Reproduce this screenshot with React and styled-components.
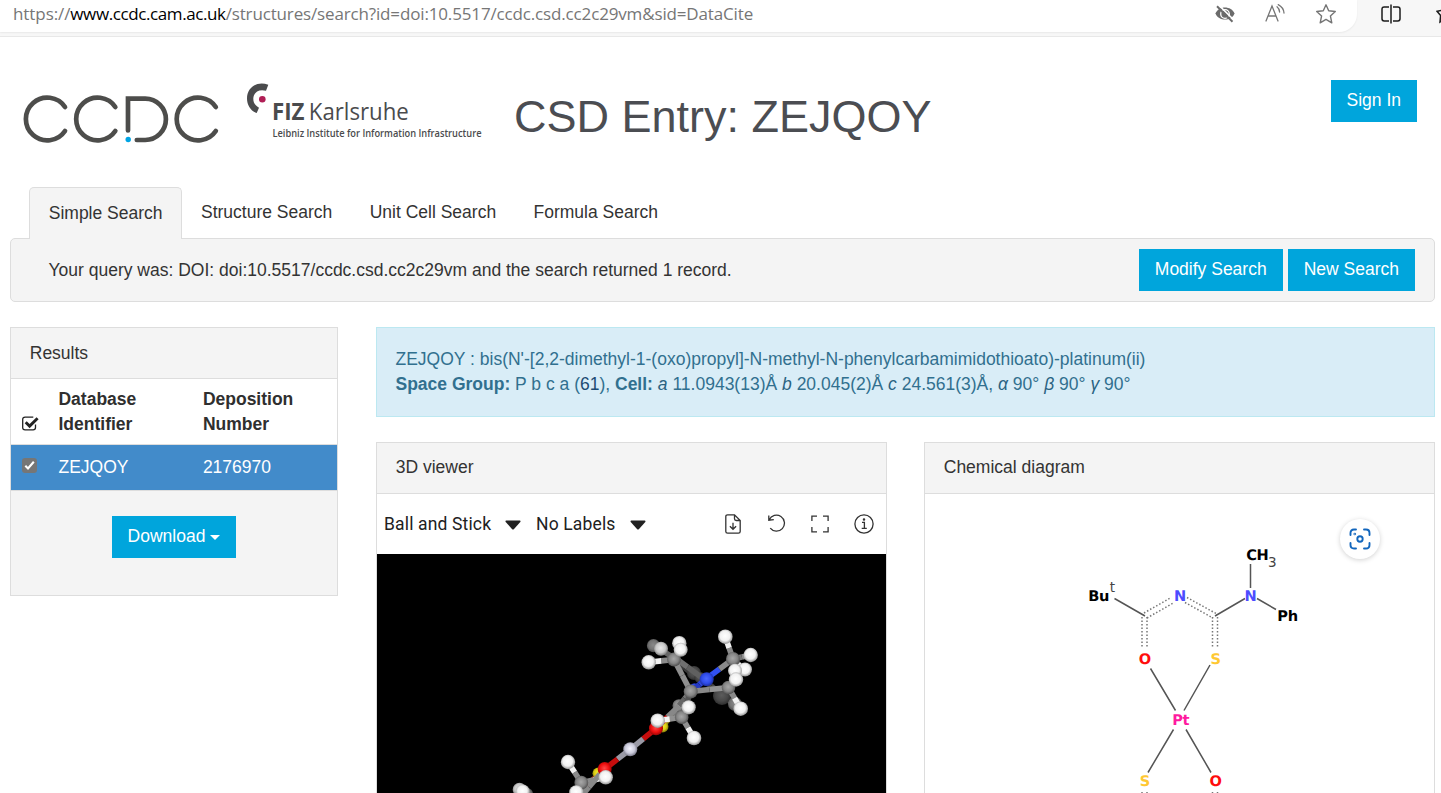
import React from 'react'
import styled, { createGlobalStyle } from 'styled-components'

const columns = ['Database Identifier', 'Deposition Number']
const tabs = ['Simple Search', 'Structure Search', 'Unit Cell Search', 'Formula Search']

// [x1, y1, x2, y2, first half colour, second half colour]
const backBonds = [
  [676, 661, 694, 675, '#3c3c3c', '#3c3c3c'],
  [655, 646, 674, 658, '#777', '#666'],
  [700, 677, 722, 695, '#4a4a4a', '#4a4a4a'],
  [722, 695, 736, 706, '#4a4a4a', '#777'],
  [663, 725, 682, 705, '#9a8a20', '#777'],
  [598, 775, 576, 795, '#9a2a10', '#666'],
]

const frontBonds = [
  [674, 657, 701, 677, '#707070', '#606060'],
  [706, 679, 693, 690, '#2c45dd', '#2438c0'],
  [706, 679, 733, 659, '#3150f0', '#8a8a8a'],
  [733, 659, 725.3, 637, '#8a8a8a', '#f2f2f2'],
  [733, 659, 750.7, 655, '#777', '#8d8d8d'],
  [733, 659, 743, 669, '#777', '#e8e8e8'],
  [690.7, 691.5, 679, 705.7, '#777', '#666'],
  [679, 706, 656, 728, '#888', '#c81010'],
  [674, 659.5, 690.7, 691.5, '#8f8f8f', '#8f8f8f'],
  [690.7, 691.5, 728.5, 687.5, '#888', '#949494'],
  [690.7, 691.5, 681.7, 717.3, '#555', '#666'],
  [674, 659.5, 648.7, 662.3, '#8a8a8a', '#f2f2f2'],
  [674, 659.5, 679.7, 648, '#8a8a8a', '#e0e0e0'],
  [728.5, 687.5, 736, 679.5, '#8a8a8a', '#e8e8e8'],
  [728.5, 687.5, 740.7, 708.7, '#8a8a8a', '#f2f2f2'],
  [681.7, 717.3, 688.7, 707.3, '#8a8a8a', '#ddd'],
  [681.7, 717.3, 694, 738, '#909090', '#f4f4f4'],
  [681.7, 717.3, 657.7, 720.7, '#909090', '#f4f4f4'],
  [656, 728.3, 630.3, 749.3, '#c60d0d', '#9a9aa6'],
  [630.3, 749.3, 604.7, 769, '#9a9aa6', '#c60d0d'],
  [581.3, 782.7, 605.7, 777.3, '#8a8a8a', '#f2f2f2'],
  [581.3, 782.7, 568, 762, '#8a8a8a', '#f2f2f2'],
  [581.3, 782.7, 576.3, 792.3, '#8a8a8a', '#f2f2f2'],
  [600, 774, 578, 800, '#888', '#888'],
]

// [x, y, radius, gradient]
const backAtoms = [
  [653.5, 645.7, 6.6, 'dim'],
  [694, 673, 7, 'dark'],
  [722, 696, 9, 'dark'],
  [735, 704, 7, 'dim'],
  [662.7, 726.7, 5.8, 'sulfur'],
  [598.3, 773.3, 5.8, 'sulfur'],
  [527, 794, 6, 'dim'],
]

const midAtoms = [
  [700, 677.5, 5.5, 'dark'],
  [694.5, 688.5, 5.2, 'nitrogen'],
  [679, 705.7, 6.5, 'carbon'],
]

const frontAtoms = [
  [661, 648.7, 7, 'light'],
  [679.3, 643.2, 7.2, 'hydrogen'],
  [674, 659.5, 6.9, 'carbon'],
  [680.7, 649.7, 7, 'hydrogen'],
  [648.7, 662.3, 7.2, 'hydrogen'],
  [725.3, 636.7, 7.3, 'hydrogen'],
  [750.7, 655, 7.2, 'hydrogen'],
  [733, 659, 7, 'carbon'],
  [745, 669.5, 7, 'hydrogen'],
  [735, 670.7, 7, 'hydrogen'],
  [728.5, 687.5, 6.8, 'carbon'],
  [736, 679.5, 7.2, 'hydrogen'],
  [706.7, 679.3, 7, 'nitrogen'],
  [690.7, 691.5, 7, 'carbon'],
  [740.7, 708.7, 7.3, 'hydrogen'],
  [681.7, 717.3, 6.8, 'carbon'],
  [688.7, 707.3, 7.1, 'hydrogen'],
  [694, 738, 7.3, 'hydrogen'],
  [656, 728.3, 7, 'oxygen'],
  [657.7, 720.7, 7.2, 'hydrogen'],
  [630.3, 749.3, 7, 'platinum'],
  [604.7, 769, 7, 'oxygen'],
  [605.7, 777.3, 7.2, 'hydrogen'],
  [581.3, 782.7, 6.9, 'carbon'],
  [568, 762, 7.2, 'hydrogen'],
  [576.3, 792.3, 7.1, 'hydrogen'],
  [519.5, 789.5, 6.8, 'light'],
  [522.7, 791.5, 7, 'hydrogen'],
]

const gradients = {
  hydrogen: ['#ffffff', '#f1f1f1', '#8c8c8c'],
  light: ['#e8e8e8', '#c9c9c9', '#777777'],
  dim: ['#8a8a8a', '#747474', '#444444'],
  dark: ['#5c5c5c', '#484848', '#2c2c2c'],
  carbon: ['#a8a8a8', '#858585', '#4c4c4c'],
  nitrogen: ['#4a68ff', '#2f4ceb', '#1a2b95'],
  oxygen: ['#ff4a4a', '#ee0d0d', '#8e0606'],
  sulfur: ['#f8f030', '#d8cc14', '#77700a'],
  platinum: ['#f4f4ff', '#cacada', '#747484'],
}

const Bond = ({ bond }) => {
  const [x1, y1, x2, y2, from, to] = bond
  const mx = (x1 + x2) / 2
  const my = (y1 + y2) / 2
  return (
    <g strokeWidth="5.6">
      <line x1={x1} y1={y1} x2={mx} y2={my} stroke={from} />
      <line x1={mx} y1={my} x2={x2} y2={y2} stroke={to} />
    </g>
  )
}

const Atom = ({ atom }) => (
  <circle cx={atom[0]} cy={atom[1]} r={atom[2]} fill={`url(#${atom[3]})`} />
)

const Molecule = () => (
  <svg width="509" height="239" viewBox="377 554 509 239">
    <defs>
      {Object.entries(gradients).map(([id, stops]) => (
        <radialGradient id={id} key={id} cx="0.48" cy="0.45" r="0.56">
          <stop offset="0" stopColor={stops[0]} />
          <stop offset="0.6" stopColor={stops[1]} />
          <stop offset="1" stopColor={stops[2]} />
        </radialGradient>
      ))}
    </defs>
    {backBonds.map((bond, i) => <Bond key={i} bond={bond} />)}
    {backAtoms.map((atom, i) => <Atom key={i} atom={atom} />)}
    {midAtoms.map((atom, i) => <Atom key={i} atom={atom} />)}
    {frontBonds.map((bond, i) => <Bond key={i} bond={bond} />)}
    {frontAtoms.map((atom, i) => <Atom key={i} atom={atom} />)}
  </svg>
)

const Diagram = () => (
  <svg width="509" height="299" viewBox="925 494 509 299">
    <g stroke="#555" strokeWidth="1.5" fill="none">
      <path d="M1114.5 598.5L1145 616M1215 616L1245 598.5M1250.5 564V588M1257 598.5L1276 609.5" />
      <path d="M1150.5 668.5L1175.5 710.5M1210 665L1184 710.5M1173.5 729.5L1148 772.5M1186 729.5L1211 772.5" />
    </g>
    <g stroke="#777" strokeWidth="1.5" fill="none" strokeDasharray="1.5 2">
      <path d="M1142 617V648M1147 617V648M1212.5 617V648M1217.5 617V648" />
      <path d="M1144 613L1171 597.5M1147 618L1174 602.5M1187 597.5L1216 613.5M1185 602.5L1213 618" />
      <path d="M1142 792V800M1147 792V800M1212.5 792V800M1217.5 792V800" />
    </g>
    <AtomLabel x="1098.7" y="601">Bu</AtomLabel>
    <Script x="1112.3" y="592">t</Script>
    <AtomLabel x="1180" y="601" fill="#4c4cff">N</AtomLabel>
    <AtomLabel x="1250.5" y="601" fill="#4c4cff">N</AtomLabel>
    <AtomLabel x="1257.3" y="560">CH</AtomLabel>
    <Script x="1272.3" y="567.3">3</Script>
    <AtomLabel x="1287.5" y="621">Ph</AtomLabel>
    <AtomLabel x="1144.7" y="663.5" fill="#ff0d0d">O</AtomLabel>
    <AtomLabel x="1215.5" y="663.5" fill="#ffc832">S</AtomLabel>
    <AtomLabel x="1180.7" y="724.5" fill="#ff1aa0">Pt</AtomLabel>
    <AtomLabel x="1144.7" y="785.5" fill="#ffc832">S</AtomLabel>
    <AtomLabel x="1215.5" y="785.5" fill="#ff0d0d">O</AtomLabel>
  </svg>
)

const CcdcLogo = () => (
  <svg width="200" height="60" viewBox="22 90 200 60">
    <g fill="none" stroke="#4d4d4b" strokeWidth="4.7" strokeLinecap="round">
      <path d="M65 107A21.4 21.4 0 1 0 65 131" />
      <path d="M115.3 107A21.4 21.4 0 1 0 115.3 131" />
      <path d="M215.8 107A21.4 21.4 0 1 0 215.8 131" />
      <path d="M128 130.5V98.6H145.2A20.7 20.7 0 0 1 145.2 140H136.8" />
    </g>
    <circle cx="128.2" cy="139.5" r="2.7" fill="#00a4e4" />
  </svg>
)

const FizLogo = () => (
  <svg width="270" height="64" viewBox="244 80 270 64" fontFamily="'Open Sans', sans-serif" fill="#4a4b4d">
    <path d="M268.3 84.8C256.5 80.5 247 88 247 98.5C247 105 250.5 110.8 256.7 113L259 107.8C255 105.5 253.3 102.5 253.3 98.8C253.3 92.5 259 88.6 266 90.8Z" />
    <circle cx="262.3" cy="99.2" r="3.3" fill="#b01e55" />
    <text x="272" y="120.3" fontSize="23.5" fontWeight="700" textLength="32.5" lengthAdjust="spacingAndGlyphs">FIZ</text>
    <text x="308.8" y="120.3" fontSize="23.5" textLength="100" lengthAdjust="spacingAndGlyphs">Karlsruhe</text>
    <text x="272.5" y="137.4" fontSize="10.6" fontWeight="600" textLength="209" lengthAdjust="spacingAndGlyphs">Leibniz Institute for Information Infrastructure</text>
  </svg>
)

const App = () => {
  return (
    <Page>
      <GlobalStyle />
      <BrowserBar>
        <AddressBar>
          <Url>
            <Muted $spacing="-0.08px">https://</Muted>
            <Host>www.ccdc.cam.ac.uk</Host>
            <Muted $spacing="-0.15px">/structures/search?id=doi:10.5517/ccdc.csd.cc2c29vm&amp;sid=DataCite</Muted>
          </Url>
          <AddressIcons>
            <svg width="20" height="18" viewBox="0 0 20 18">
              <path d="M0.5 8.5C3.5 0.5 16.5 0.5 19.5 8.5C16.5 16.5 3.5 16.5 0.5 8.5Z" fill="#6b6b6b" />
              <circle cx="10" cy="9" r="4.3" fill="none" stroke="#fff" strokeWidth="1.3" />
              <path d="M4.2 0.6L19.4 15.5" stroke="#fff" strokeWidth="1.6" />
              <path d="M2 1.2L17.5 16.8" stroke="#6b6b6b" strokeWidth="2" />
            </svg>
            <svg width="20" height="20" viewBox="0 0 20 20" fill="none" stroke="#757575" strokeWidth="1.3" strokeLinecap="round">
              <path d="M1 17L7 2L13 17M3.2 12H10.8" />
              <path d="M12 2.8Q14.5 4.8 14.6 8M13.2 0.7Q18.5 3.4 19 9" />
            </svg>
            <svg width="22" height="22" viewBox="0 0 22 22" fill="none" stroke="#757575" strokeWidth="1.4" strokeLinejoin="round">
              <path d="M11 1.8L13.7 7.8L20.3 8.5L15.4 12.9L16.8 19.8L11 16.4L5.2 19.8L6.6 12.9L1.7 8.5L8.3 7.8Z" />
            </svg>
          </AddressIcons>
        </AddressBar>
        <BarTools>
          <svg width="20" height="20" viewBox="0 0 20 20" fill="none" stroke="#1c1c1c" strokeWidth="1.5">
            <path d="M8 3H3.2Q1 3 1 5.2V14.8Q1 17 3.2 17H8M12 3H16.8Q19 3 19 5.2V14.8Q19 17 16.8 17H12M10 0.5V19.5" />
          </svg>
          <svg width="5" height="20" viewBox="0 0 5 20" fill="none" stroke="#1c1c1c" strokeWidth="1.5">
            <path d="M7 6L1 7.2L4.6 11.5L4 18L7 16" />
          </svg>
        </BarTools>
      </BrowserBar>

      <Header>
        <CcdcLogo />
        <FizLogo />
        <Title>CSD Entry: ZEJQOY</Title>
        <Button>Sign In</Button>
      </Header>

      <Tabs>
        {tabs.map((tab, i) => (
          <Tab key={tab} $active={i === 0}>{tab}</Tab>
        ))}
      </Tabs>
      <QueryBox>
        <p>Your query was: DOI: doi:10.5517/ccdc.csd.cc2c29vm and the search returned 1 record.</p>
        <QueryButtons>
          <Button>Modify Search</Button>
          <Button>New Search</Button>
        </QueryButtons>
      </QueryBox>

      <Content>
        <Results>
          <ResultsHeading>Results</ResultsHeading>
          <HeadRow>
            <svg width="17" height="15" viewBox="0 0 17 15" fill="none" stroke="#222">
              <path d="M13.5 8.5V11.5Q13.5 13.9 11.1 13.9H3.1Q0.7 13.9 0.7 11.5V3.6Q0.7 1.2 3.1 1.2H11.3" strokeWidth="1.3" />
              <path d="M3.7 6.3L7.6 10.1L15.6 2.2" strokeWidth="2.9" />
            </svg>
            {columns.map(column => <HeadCell key={column}>{column}</HeadCell>)}
          </HeadRow>
          <ResultRow>
            <Check>
              <svg width="15" height="15" viewBox="0 0 15 15" fill="none" stroke="#fff" strokeWidth="2.1">
                <path d="M3.3 7.8L6 10.5L11.8 3.8" />
              </svg>
            </Check>
            <span>ZEJQOY</span>
            <span>2176970</span>
          </ResultRow>
          <ResultsFooter>
            <Button>Download<Caret /></Button>
          </ResultsFooter>
        </Results>

        <Entry>
          <Summary>
            ZEJQOY : bis(N'-[2,2-dimethyl-1-(oxo)propyl]-N-methyl-N-phenylcarbamimidothioato)-platinum(ii)
            <br />
            <b>Space Group:</b> P b c a (<Number>61</Number>), <b>Cell:</b> <Axis>a</Axis> 11.0943(13)Å <Axis>b</Axis> 20.045(2)Å <Axis>c</Axis> 24.561(3)Å, <Axis>α</Axis> 90° <Axis>β</Axis> 90° <Axis>γ</Axis> 90°
          </Summary>
          <Panels>
            <Panel>
              <PanelHeading>3D viewer</PanelHeading>
              <ViewerBar>
                <Select $width="152px">
                  Ball and Stick
                  <svg width="16" height="10" viewBox="0 0 16 10"><path d="M1.2 0.5H14.8Q16 0.8 15.3 2L8.8 9.2Q8 9.9 7.2 9.2L0.7 2Q0 0.8 1.2 0.5Z" fill="#212121" /></svg>
                </Select>
                <Select $width="124px">
                  No Labels
                  <svg width="16" height="10" viewBox="0 0 16 10"><path d="M1.2 0.5H14.8Q16 0.8 15.3 2L8.8 9.2Q8 9.9 7.2 9.2L0.7 2Q0 0.8 1.2 0.5Z" fill="#212121" /></svg>
                </Select>
                <ViewerIcons>
                  <svg width="20" height="20" viewBox="0 0 20 20">
                    <path d="M11.5 0.8H4.6Q2.8 0.8 2.8 2.6V17.4Q2.8 19.2 4.6 19.2H15.4Q17.2 19.2 17.2 17.4V6.5ZM11.5 0.8V4.7Q11.5 6.5 13.3 6.5H17.2M10 8.7V15.2M6.9 12.2L10 15.3L13.1 12.2" />
                  </svg>
                  <svg width="20" height="20" viewBox="0 0 20 20">
                    <path d="M2.2 5.8A8 8 0 1 1 3.2 14.2M1.8 1.6V6.2L6.8 5.6" />
                  </svg>
                  <svg width="20" height="20" viewBox="0 0 20 20">
                    <path d="M1.9 7V2.2H7M13 2.2H18.1V7M18.1 13V17.8H13M7 17.8H1.9V13" />
                  </svg>
                  <svg width="20" height="20" viewBox="0 0 20 20">
                    <circle cx="10" cy="10" r="9.1" />
                    <path d="M8 8.3H10.4V14.2M7.7 14.3H12.8" />
                    <circle cx="10" cy="5.5" r="0.6" />
                  </svg>
                </ViewerIcons>
              </ViewerBar>
              <Canvas><Molecule /></Canvas>
            </Panel>
            <Panel>
              <PanelHeading>Chemical diagram</PanelHeading>
              <DiagramBody>
                <Diagram />
                <VisualSearch>
                  <svg width="22" height="22" viewBox="0 0 22 22" fill="none" stroke="#1266bd" strokeWidth="1.9" strokeLinecap="round">
                    <path d="M1.5 7V5Q1.5 1.5 5 1.5H7M15 1.5H17Q20.5 1.5 20.5 5V7M20.5 15V17Q20.5 20.5 17 20.5H15M7 20.5H5Q1.5 20.5 1.5 17V15" />
                    <circle cx="11" cy="11" r="2.7" />
                    <circle cx="5.8" cy="6" r="0.4" />
                  </svg>
                </VisualSearch>
              </DiagramBody>
            </Panel>
          </Panels>
        </Entry>
      </Content>
    </Page>
  )
}

export default App

const GlobalStyle = createGlobalStyle`
  * {
    box-sizing: border-box;
  }

  body {
    margin: 0;
    background: #fff;
    overflow: hidden;
  }

  p, h1 {
    margin: 0;
  }

  svg {
    display: block;
    flex-shrink: 0;
  }
`

const Page = styled.div`
  width: 1441px;
  height: 793px;
  overflow: hidden;
  background: #fff;
  color: #333;
  font-family: 'Liberation Sans', Arial, sans-serif;
  font-size: 17.5px;
  line-height: 25px;
`

const BrowserBar = styled.div`
  display: flex;
  height: 37px;
  background: #f7f7f7;
  border-bottom: 1px solid #e8e8e8;
`

const AddressBar = styled.div`
  display: flex;
  justify-content: space-between;
  width: 1357px;
  height: 32px;
  padding: 0 20px 0 13px;
  background: #fff;
  border-bottom-right-radius: 18px;
  box-shadow: 0 1px 2px rgba(0, 0, 0, 0.06);
`

const Url = styled.div`
  font-family: 'Open Sans', sans-serif;
  font-size: 17px;
  line-height: 28px;
  white-space: nowrap;
`

const Muted = styled.span`
  color: #767676;
  letter-spacing: ${props => props.$spacing};
`

const Host = styled.span`
  color: #000;
  letter-spacing: -0.4px;
`

const AddressIcons = styled.div`
  display: flex;
  align-items: center;
  gap: 30px;
  height: 27px;
`

const BarTools = styled.div`
  display: flex;
  align-items: center;
  flex: 1;
  justify-content: space-between;
  height: 27px;
  padding-left: 24px;
`

const Header = styled.div`
  display: flex;
  align-items: flex-start;
  height: 150px;
  padding: 43px 24px 0 22px;

  > svg:first-child {
    margin-top: 10px;
  }

  > svg + svg {
    margin-left: 22px;
  }

  > button {
    margin-left: auto;
  }
`

const Title = styled.h1`
  margin-top: 12px;
  color: #4b4d52;
  font-size: 45px;
  font-weight: 400;
  line-height: 50px;
  white-space: nowrap;
`

const Button = styled.button`
  display: flex;
  align-items: center;
  height: 42px;
  padding: 0 16px 2px;
  border: 0;
  background: #00a5dc;
  color: #fff;
  font: inherit;
  white-space: nowrap;
`

const Tabs = styled.div`
  display: flex;
  position: relative;
  height: 52px;
  margin: 0 0 -1px 29px;
`

const Tab = styled.div`
  height: 52px;
  padding: 12.5px 18.7px;
  ${props => props.$active && `
    padding: 12.5px 18.75px;
    border: 1px solid #ddd;
    border-bottom: 0;
    border-radius: 5px 5px 0 0;
    background: #f4f4f4;
  `}
`

const QueryBox = styled.div`
  display: flex;
  justify-content: space-between;
  height: 64px;
  margin: 0 6px 0 10px;
  padding: 10px 19px 0 37.5px;
  border: 1px solid #ddd;
  border-radius: 5px;
  background: #f4f4f4;

  p {
    padding-top: 9px;
  }
`

const QueryButtons = styled.div`
  display: flex;
  gap: 5px;
`

const Content = styled.div`
  display: flex;
  align-items: flex-start;
  gap: 38px;
  margin-top: 25px;
  padding: 0 6px 0 10px;
`

const Panel = styled.div`
  border: 1px solid #ddd;
  background: #fff;
`

const Results = styled(Panel)`
  width: 328px;
`

const PanelHeading = styled.div`
  height: 51px;
  padding: 12px 18.75px;
  border-bottom: 1px solid #ddd;
  background: #f4f4f4;
`

const ResultsHeading = styled(PanelHeading)`
  padding-top: 13px;
`

const HeadRow = styled.div`
  display: grid;
  grid-template-columns: 36.8px 144.4px 1fr;
  align-items: end;
  height: 66px;
  padding: 0 0 7px 10.7px;
  border-bottom: 1px solid #ddd;

  svg {
    margin-bottom: 6px;
  }
`

const HeadCell = styled.div`
  width: 100px;
  color: #2f2f2f;
  font-weight: 700;
`

const ResultRow = styled.div`
  display: grid;
  grid-template-columns: 36.8px 144.4px 1fr;
  align-items: center;
  height: 46px;
  padding: 0 0 0 10.7px;
  border-bottom: 1px solid #ddd;
  background: #428bca;
  color: #fff;
`

const Check = styled.div`
  width: 15px;
  height: 15px;
  margin-bottom: 4px;
  border-radius: 3px;
  background: #767676;
`

const ResultsFooter = styled.div`
  display: flex;
  justify-content: center;
  height: 104px;
  padding-top: 25px;
  background: #f4f4f4;
`

const Caret = styled.span`
  margin: 3px 0 0 5px;
  border-top: 5px solid #fff;
  border-left: 5px solid transparent;
  border-right: 5px solid transparent;
`

const Entry = styled.div`
  flex: 1;
`

const Summary = styled.div`
  height: 90px;
  padding: 19px 18.5px;
  border: 1px solid #bce8f1;
  background: #d9edf7;
  color: #31708f;
`

const Number = styled.span`
  color: #1d4b73;
`

const Axis = styled.em`
  color: #2a6382;
`

const Panels = styled.div`
  display: grid;
  grid-template-columns: 511px 511px;
  gap: 37px;
  margin-top: 25px;
`

const ViewerBar = styled.div`
  display: flex;
  align-items: center;
  height: 60px;
  padding: 0 12px 0 7px;
`

const Select = styled.div`
  display: flex;
  align-items: center;
  gap: 14px;
  width: ${props => props.$width};
  color: #212121;
  font-family: Roboto, sans-serif;
  font-size: 17.5px;
  letter-spacing: 0.15px;
  white-space: nowrap;

  svg {
    margin-top: 2px;
  }
`

const ViewerIcons = styled.div`
  display: flex;
  gap: 23.7px;
  margin-left: auto;

  svg {
    fill: none;
    stroke: #333;
    stroke-width: 1.3;
  }
`

const Canvas = styled.div`
  height: 239px;
  background: #000;
`

const DiagramBody = styled.div`
  position: relative;
  height: 299px;
`

const VisualSearch = styled.div`
  position: absolute;
  top: 25px;
  right: 54px;
  display: flex;
  align-items: center;
  justify-content: center;
  width: 40px;
  height: 40px;
  border-radius: 50%;
  background: #fff;
  box-shadow: 0 1px 5px rgba(0, 0, 0, 0.18);
`

const AtomLabel = styled.text`
  font-family: 'DejaVu Sans', sans-serif;
  font-size: 14.6px;
  font-weight: 700;
  letter-spacing: -0.4px;
  text-anchor: middle;
  text-rendering: geometricPrecision;
`

const Script = styled.text`
  fill: #444;
  font-family: 'DejaVu Sans', sans-serif;
  font-size: 13.5px;
  text-anchor: middle;
`
